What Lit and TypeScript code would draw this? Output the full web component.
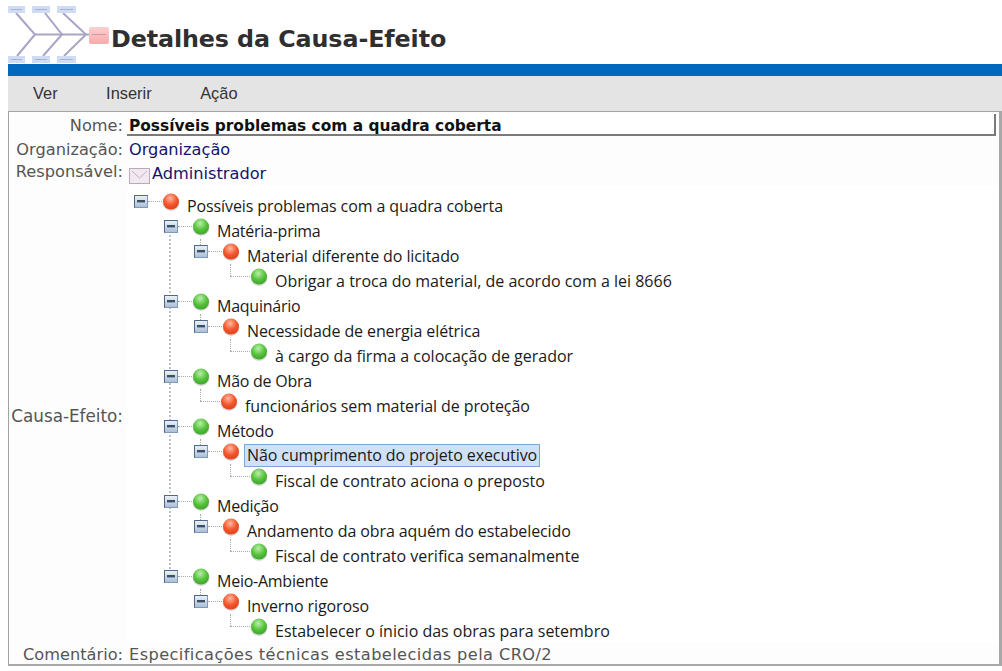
import { LitElement, html, css, svg } from "lit";
import { customElement } from "lit/decorators.js";

type Node = { t: string; c: "r" | "g"; lvl: number; leaf?: boolean; sel?: boolean };
const nodes: Node[] = [
  { t: "Possíveis problemas com a quadra coberta", c: "r", lvl: 0 },
  { t: "Matéria-prima", c: "g", lvl: 1 },
  { t: "Material diferente do licitado", c: "r", lvl: 2 },
  { t: "Obrigar a troca do material, de acordo com a lei 8666", c: "g", lvl: 3, leaf: true },
  { t: "Maquinário", c: "g", lvl: 1 },
  { t: "Necessidade de energia elétrica", c: "r", lvl: 2 },
  { t: "à cargo da firma a colocação de gerador", c: "g", lvl: 3, leaf: true },
  { t: "Mão de Obra", c: "g", lvl: 1 },
  { t: "funcionários sem material de proteção", c: "r", lvl: 2, leaf: true },
  { t: "Método", c: "g", lvl: 1 },
  { t: "Não cumprimento do projeto executivo", c: "r", lvl: 2, sel: true },
  { t: "Fiscal de contrato aciona o preposto", c: "g", lvl: 3, leaf: true },
  { t: "Medição", c: "g", lvl: 1 },
  { t: "Andamento da obra aquém do estabelecido", c: "r", lvl: 2 },
  { t: "Fiscal de contrato verifica semanalmente", c: "g", lvl: 3, leaf: true },
  { t: "Meio-Ambiente", c: "g", lvl: 1 },
  { t: "Inverno rigoroso", c: "r", lvl: 2 },
  { t: "Estabelecer o ínicio das obras para setembro", c: "g", lvl: 3, leaf: true },
];

const fish = svg`<svg class="fish" width="103" height="64" viewBox="0 0 103 64">
  <defs>
    <linearGradient id="pk" x1="0" y1="0" x2="0" y2="1"><stop offset="0" stop-color="#fbd0d0"/><stop offset="1" stop-color="#f9a9a9"/></linearGradient>
  </defs>
  <g stroke="#a9a5c6" stroke-width="2" fill="none">
    <path d="M27 34.5H81"/>
    <path d="M8 13L27 34.5L9 56M37 13L54 34.5L35 56M55 13L78 34.5L56 56"/>
  </g>
  <g fill="#cfdcf3">
    <rect x="0" y="6" width="17" height="7"/><rect x="24" y="6" width="18" height="7"/><rect x="49" y="6" width="19" height="7"/>
    <rect x="0" y="56" width="17" height="7"/><rect x="24" y="56" width="18" height="7"/><rect x="49" y="56" width="19" height="7"/>
  </g>
  <g stroke="#9aa8c4" stroke-width=".8">
    <path d="M3 9.5H14M27 9.5H39M52 9.5H65M3 59.5H14M27 59.5H39M52 59.5H65"/>
  </g>
  <rect x="81" y="27" width="20" height="17" rx="2" fill="url(#pk)"/>
  <path d="M84 34.5H98" stroke="#c98a96" stroke-width=".8"/>
</svg>`;

const minus = svg`<svg width="15" height="14" viewBox="0 0 15 14">
  <defs><linearGradient id="mb" x1="0" y1="0" x2="0" y2="1"><stop offset="0" stop-color="#eef2f7"/><stop offset="1" stop-color="#a9bdd6"/></linearGradient></defs>
  <rect x=".5" y=".5" width="13" height="12" fill="url(#mb)" stroke="#7f9ab8"/>
  <path d="M.5 12.5V.5H13.5" fill="none" stroke="#4d6885"/>
  <rect x="3" y="5" width="8" height="2.4" fill="#3a4f69"/>
</svg>`;

const ball = (c: string) => {
  const id = c === "r" ? "br" : "bg";
  const a = c === "r" ? ["#ffb8a0", "#f4552c", "#d8401c"] : ["#b8f0a8", "#55c23a", "#3a9f2a"];
  return svg`<svg width="18" height="18" viewBox="0 0 18 18">
    <defs><radialGradient id=${id} cx=".45" cy=".3" r=".75"><stop offset="0" stop-color=${a[0]}/><stop offset=".55" stop-color=${a[1]}/><stop offset="1" stop-color=${a[2]}/></radialGradient></defs>
    <circle cx="9" cy="9.6" r="8.4" fill="#8a8a8a" opacity=".35"/>
    <circle cx="9" cy="8.6" r="8" fill="url(#${id})"/>
  </svg>`;
};

@customElement("app-root")
export class AppRoot extends LitElement {
  static styles = css`
    :host { display: block; padding-left: 8px; font-family: "DejaVu Sans", Verdana, sans-serif; background: #fff; height: 671px; box-sizing: border-box; overflow: hidden; }
    svg { display: block; }
    .head { height: 64px; display: flex; align-items: flex-start; }
    .fish { flex: none; }
    h1 { margin: 24px 0 0 0; font-size: 23.8px; line-height: 30px; font-weight: 700; color: #2f2f2f; white-space: nowrap; letter-spacing: -.1px; }
    .blue { height: 12px; background: #0069bd; }
    .menu { height: 35px; background: #e4e4e4; display: flex; align-items: center; font-family: "Liberation Sans", Arial, sans-serif; font-size: 16.4px; color: #333; padding-left: 25px; gap: 48.5px; box-sizing: border-box; }
    .menu span { display: block; }
    .panel { border: 1px solid #a3a3a3; border-right: 3px solid #a8a8a8; border-bottom: 2px solid #a8a8a8; height: 555px; box-sizing: border-box; display: grid; grid-template-columns: 118px 1fr; grid-template-rows: 25px 23px 26px 456px 23px; width: 994px; background: #fdfdfd; }
    .lbl { text-align: right; font-size: 16.2px; color: #555; padding: 2px 4px 0 0; line-height: 23px; white-space: nowrap; box-sizing: border-box; }
    .val { font-size: 16.2px; color: #14146e; line-height: 23px; padding: 2px 0 0 2px; white-space: nowrap; box-sizing: border-box; }
    .lbl.org, .val.org { padding-top: 1px; }
    .lbl.resp { padding-top: 0; }
    .lbl.treelbl { display: flex; align-items: center; justify-content: flex-end; padding: 4px 4px 0 0; font-size: 16.8px; }
    .name { font-size: 15.4px; font-weight: 700; color: #111; border-right: 2px solid #7a7a7a; border-bottom: 2px solid #7a7a7a; margin: 2px 3px 0 0; padding-top: 2px; line-height: 21px; height: 22px; background: #fff; }
    .env { display: flex; align-items: center; padding-top: 0; }
    .env svg { flex: none; margin: 5px 2px 0 0; }
    .com { color: #555; font-size: 16.2px; letter-spacing: .41px; padding-top: 1px; }
    .lbl.coml { padding-top: 1px; }
    .tree { background: #fff; position: relative; font-family: "Open Sans", "Liberation Sans", sans-serif; font-size: 16px; color: #1a1a1a; }
    .row { height: 25px; position: relative; }
    .row > * { position: absolute; }
    .txt { top: 9px; line-height: 22px; white-space: nowrap; height: 22px; }
    .txt.l0, .txt.l2 { letter-spacing: -.1px; }
    .txt.l1 { letter-spacing: -.25px; }
    .sel { background: #cfe1f6; border: 1px solid #7ea6d2; padding: 0 2px; box-sizing: border-box; top: 8px; height: 23px; line-height: 21px; }
    .box { top: 9px; }
    .ball { top: 7px; width: 18px; height: 18px; }
    .dh { height: 0; border-top: 1px dotted #aaa; top: 15px; }
    .dv { width: 0; border-left: 1px dotted #aaa; }
    .trunk { position: absolute; left: 42px; top: 38px; height: 353px; width: 0; border-left: 2px dotted #c0c0c0; }
  `;

  row(n: Node) {
    const xs = [7, 37, 67];
    const ballX = n.leaf ? (n.lvl === 3 ? 123 : 93) : [35, 65, 95][n.lvl];
    const txtX = n.leaf ? (n.lvl === 3 ? 148 : 118) : [60, 90, 120][n.lvl];
    return html`<div class="row">
      ${n.leaf
        ? html`<div class="dv" style="left:${ballX - 20}px;top:3px;height:12px"></div>
               <div class="dh" style="left:${ballX - 20}px;width:20px"></div>`
        : html`${n.lvl === 2
            ? html`<div class="dv" style="left:${xs[2] + 6}px;top:3px;height:6px"></div>`
            : ""}
            <div class="box" style="left:${xs[n.lvl]}px">${minus}</div>
            <div class="dh" style="left:${xs[n.lvl] + 14}px;width:${ballX - xs[n.lvl] - 14}px"></div>`}
      <div class="ball" style="left:${ballX}px">${ball(n.c)}</div>
      <div class="txt l${n.lvl} ${n.sel ? "sel" : ""}" style="left:${n.sel ? txtX - 3 : txtX}px">${n.t}</div>
    </div>`;
  }

  render() {
    return html`
      <div class="head">${fish}<h1>Detalhes da Causa-Efeito</h1></div>
      <div class="blue"></div>
      <div class="menu"><span>Ver</span><span>Inserir</span><span>Ação</span></div>
      <div class="panel">
        <div class="lbl">Nome:</div><div class="val name">Possíveis problemas com a quadra coberta</div>
        <div class="lbl org">Organização:</div><div class="val org">Organização</div>
        <div class="lbl resp">Responsável:</div>
        <div class="val env">
          <svg width="21" height="16" viewBox="0 0 21 16"><rect x=".5" y=".5" width="20" height="15" fill="#f1e9ef" stroke="#b9a9b9"/><path d="M3 3L10.5 10L18 3" fill="none" stroke="#c9a9c9"/></svg><span>Administrador</span>
        </div>
        <div class="lbl treelbl">Causa-Efeito:</div>
        <div class="tree"><div class="trunk"></div>${nodes.map((n) => this.row(n))}</div>
        <div class="lbl coml">Comentário:</div><div class="val com">Especificações técnicas estabelecidas pela CRO/2</div>
      </div>`;
  }
}
